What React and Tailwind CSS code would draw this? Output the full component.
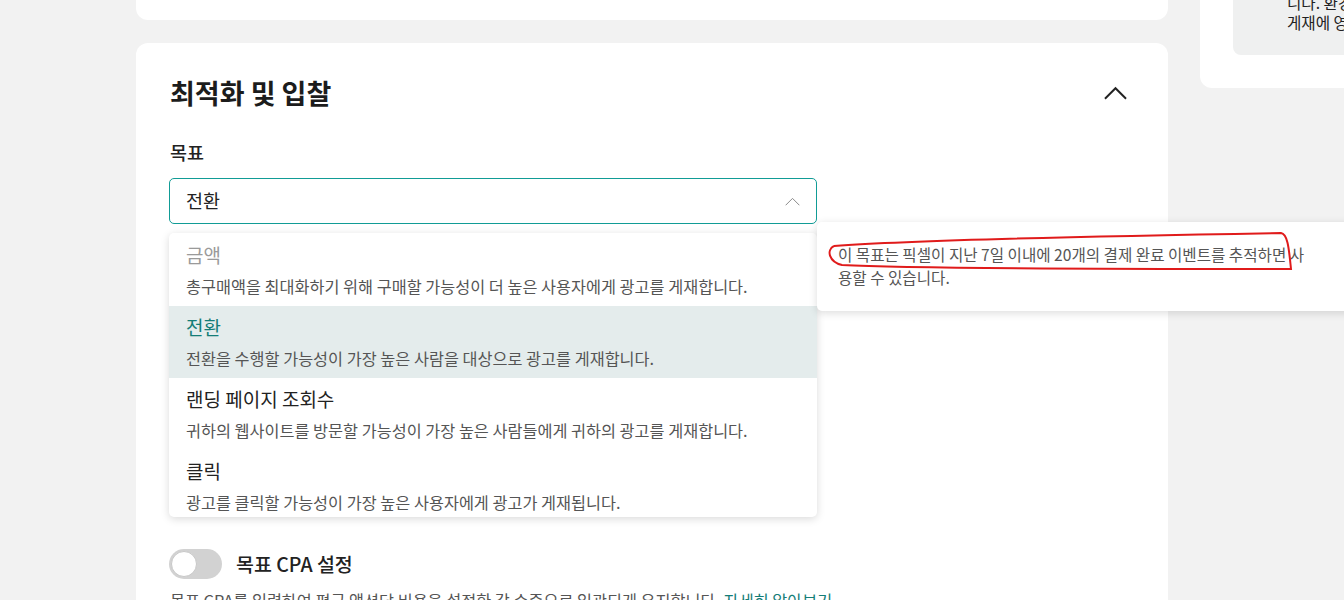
import React, { useState } from "react";

const goals = [
  { id: "value", title: "금액", desc: "총구매액을 최대화하기 위해 구매할 가능성이 더 높은 사용자에게 광고를 게재합니다.", disabled: true },
  { id: "conv", title: "전환", desc: "전환을 수행할 가능성이 가장 높은 사람을 대상으로 광고를 게재합니다." },
  { id: "lpv", title: "랜딩 페이지 조회수", desc: "귀하의 웹사이트를 방문할 가능성이 가장 높은 사람들에게 귀하의 광고를 게재합니다." },
  { id: "click", title: "클릭", desc: "광고를 클릭할 가능성이 가장 높은 사용자에게 광고가 게재됩니다." },
];

function ChevronUp({ className, strokeWidth = 2 }) {
  return (
    <svg viewBox="0 0 24 14" className={className} fill="none" stroke="currentColor" strokeWidth={strokeWidth}>
      <polyline points="1,13 12,2 23,13" />
    </svg>
  );
}

export default function App() {
  const [selected, setSelected] = useState("conv");
  const [cpaOn, setCpaOn] = useState(false);

  return (
    <div className="relative w-[1344px] h-[600px] overflow-hidden bg-[#f2f2f2] font-['Noto_Sans_CJK_KR','Noto_Sans',sans-serif] text-[#222]">
      <div className="flex pl-[136px] gap-[32px]">
        {/* main column */}
        <div className="w-[1032px] shrink-0 flex flex-col gap-[23px]">
          <div className="h-5 bg-white rounded-b-xl" />

          <div className="bg-white rounded-xl pt-[34px] px-[34px] h-[600px]">
            {/* header */}
            <div className="flex items-center justify-between">
              <h2 className="text-[27px] leading-[32px] font-semibold text-[#1c1c1c]">최적화 및 입찰</h2>
              <button className="mr-[7px] text-[#222]">
                <ChevronUp className="w-[23px] h-[14px]" strokeWidth={2} />
              </button>
            </div>

            {/* goal */}
            <div className="mt-[30px] text-[18.5px] leading-[26px] font-medium">목표</div>
            <div className="relative mt-[13px] w-[648px] -ml-px">
              <div className="h-[46px] border border-[#119c96] rounded-[5px] flex items-center justify-between pl-[16px] pr-[16px]">
                <span className="text-[18.5px] text-[#222]">전환</span>
                <ChevronUp className="w-[15px] h-[9px] text-[#8a8a8a]" strokeWidth={1.6} />
              </div>

              {/* dropdown menu */}
              <div className="absolute top-[55px] left-0 w-[648px] h-[284px] overflow-hidden bg-white rounded-[5px] shadow-[0_2px_8px_rgba(0,0,0,0.15)] pt-px z-10">
                {goals.map((g) => (
                  <div
                    key={g.id}
                    onClick={() => !g.disabled && setSelected(g.id)}
                    className={`h-[72px] pl-[17px] pt-[9px] ${selected === g.id ? "bg-[#e4ecec]" : ""}`}
                  >
                    <div
                      className={`text-[19px] leading-[24px] ${
                        g.disabled ? "text-[#9a9a9a]" : selected === g.id ? "text-[#147d77]" : "text-[#222]"
                      }`}
                    >
                      {g.title}
                    </div>
                    <div className="mt-2 text-[16.3px] leading-[22px] text-[#555]">{g.desc}</div>
                  </div>
                ))}
              </div>
            </div>

            {/* target CPA toggle */}
            <div className="mt-[325px] flex items-center gap-[14px] -ml-px">
              <button
                onClick={() => setCpaOn(!cpaOn)}
                className={`w-[53px] h-[30px] rounded-full p-[2px] flex ${cpaOn ? "bg-[#119c96] justify-end" : "bg-[#d2d2d2] justify-start"}`}
              >
                <span className="w-[26px] h-[26px] rounded-full bg-white border border-[#c8c8c8]" />
              </button>
              <span className="text-[19.5px] leading-[26px] font-medium">목표 CPA 설정</span>
            </div>
            <p className="mt-[10px] text-[16.3px] leading-[22px] text-[#555]">
              목표 CPA를 입력하여 평균 액션당 비용을 설정한 값 수준으로 일관되게 유지합니다.{" "}
              <a className="text-[#147d77]">자세히 알아보기</a>
            </p>
          </div>
        </div>

        {/* right column */}
        <div className="w-[300px] shrink-0">
          <div className="h-[88px] bg-white rounded-bl-xl px-[33px] pb-[33px] flex flex-col justify-end">
            <div className="h-[55px] bg-[#eff0f0] rounded-bl-lg flex flex-col justify-end pl-[54px] pb-[23px] overflow-hidden">
              <div className="text-[15.6px] leading-[20px] whitespace-nowrap">니다. 환경에 따라 광고</div>
              <div className="text-[15.6px] leading-[20px] whitespace-nowrap">게재에 영향을 줄 수 있습니다.</div>
            </div>
          </div>
        </div>
      </div>

      {/* tooltip */}
      <div className="absolute left-[817px] top-[222px] w-[620px] h-[89px] bg-white rounded-[5px] shadow-[0_2px_8px_rgba(0,0,0,0.14)] pl-[21px] pt-[21px] z-20">
        <p className="w-[472px] text-[15.6px] leading-[23px] text-[#555]">
          이 목표는 픽셀이 지난 7일 이내에 20개의 결제 완료 이벤트를 추적하면 사용할 수 있습니다.
        </p>
      </div>

      {/* red annotation */}
      <svg className="absolute inset-0 w-[1344px] h-[600px] pointer-events-none z-30" viewBox="0 0 1344 600" fill="none">
        <path
          d="M 834 246 C 900 241, 1100 236, 1281 233 C 1288 234, 1289 250, 1291 269 C 1100 269, 900 268, 842 265 C 829 262, 826 250, 834 246"
          stroke="#e01b1b"
          strokeWidth="2"
        />
      </svg>
    </div>
  );
}
